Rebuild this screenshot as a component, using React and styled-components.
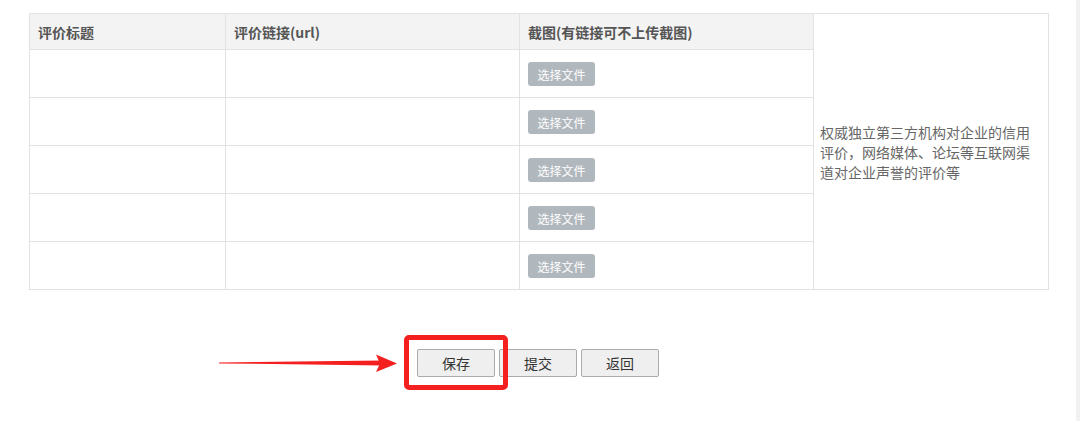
import styled, { createGlobalStyle } from "styled-components";

const GlobalStyle = createGlobalStyle`
    html, body {
        margin: 0;
        padding: 0;
        background: #FFFFFF;
        font-family: "Noto Sans CJK SC", "Noto Sans", sans-serif;
    }
    * {
        box-sizing: border-box;
    }
`

export default function App() {
    const rows = [0, 1, 2, 3, 4]
    return (
        <Page>
            <GlobalStyle />

            <EvalTable>
                <colgroup>
                    <col style={{ width: 196 }} />
                    <col style={{ width: 294 }} />
                    <col style={{ width: 294 }} />
                    <col style={{ width: 235 }} />
                </colgroup>
                <tbody>
                    <tr>
                        <HeadCell>评价标题</HeadCell>
                        <HeadCell>评价链接(url)</HeadCell>
                        <HeadCell>截图(有链接可不上传截图)</HeadCell>
                        <NoteCell rowSpan={6}>
                            权威独立第三方机构对企业的信用评价，网络媒体、论坛等互联网渠道对企业声誉的评价等
                        </NoteCell>
                    </tr>
                    {rows.map(index => (
                        <tr key={index}>
                            <BodyCell />
                            <BodyCell />
                            <BodyCell>
                                <FileButton>选择文件</FileButton>
                            </BodyCell>
                        </tr>
                    ))}
                </tbody>
            </EvalTable>

            <Footer>
                <Arrow width="178" height="20" viewBox="0 0 178 20">
                    <polygon points="0,9.4 163,7.6 163,12.4 0,10.4" fill="#F41F1F" />
                    <polygon points="157,1.5 178,10.5 157,19 161,10.5" fill="#F41F1F" />
                </Arrow>
                <Actions>
                    <Highlighted>
                        <ActionButton>保存</ActionButton>
                    </Highlighted>
                    <ActionButton>提交</ActionButton>
                    <ActionButton>返回</ActionButton>
                </Actions>
            </Footer>
        </Page>
    );
}

const Page = styled.div`
    width: 1080px;
    min-height: 421px;
    padding: 13px 0 0 29px;
    border-right: 4px solid #F1F1F1;
`

const EvalTable = styled.table`
    width: 1019px;
    border-collapse: collapse;
    table-layout: fixed;
`

const HeadCell = styled.td`
    height: 36px;
    padding: 0 0 0 8px;
    background-color: #F3F3F3;
    border: 1px solid #E2E2E2;
    font-size: 14px;
    font-weight: 700;
    color: #555555;
    text-align: left;
    vertical-align: middle;
`

const BodyCell = styled.td`
    height: 48px;
    padding: 0 0 0 8px;
    border: 1px solid #E2E2E2;
    vertical-align: middle;
`

const NoteCell = styled.td`
    padding: 0 8px 0 6px;
    border: 1px solid #E2E2E2;
    font-size: 14px;
    line-height: 20px;
    color: #666666;
    vertical-align: middle;
`

const FileButton = styled.button`
    width: 67px;
    height: 24px;
    padding: 0;
    border: none;
    border-radius: 3px;
    background-color: #B1B8BD;
    color: #FFFFFF;
    font-family: inherit;
    font-size: 12px;
`

const Footer = styled.div`
    display: flex;
    align-items: center;
    margin-top: 59px;
    padding-left: 190px;
`

const Arrow = styled.svg`
    display: block;
    margin-right: 20px;
`

const Actions = styled.div`
    display: flex;
    gap: 4px;
`

const Highlighted = styled.span`
    position: relative;
    display: flex;

    &::after {
        content: "";
        position: absolute;
        left: -13px;
        right: -13px;
        top: -14px;
        bottom: -13px;
        border: 5px solid #F41F1F;
        border-radius: 5px;
        pointer-events: none;
    }
`

const ActionButton = styled.button`
    width: 78px;
    height: 28px;
    padding: 0;
    border: 1px solid #ABABAB;
    border-radius: 2px;
    background-color: #EFEFEF;
    color: #333333;
    font-family: inherit;
    font-size: 14px;
`
